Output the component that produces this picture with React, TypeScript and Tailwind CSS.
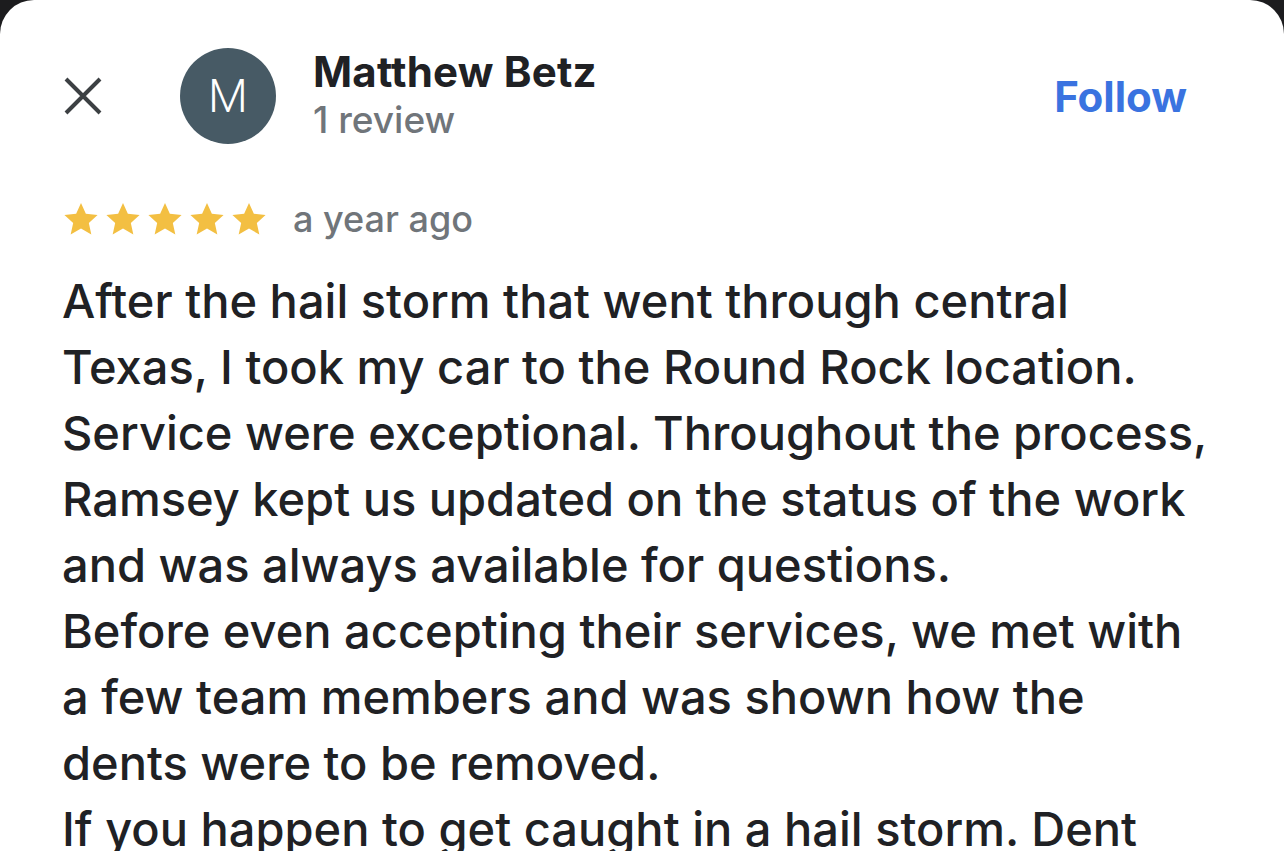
import React from "react";

function Star() {
  return (
    <svg width="38" height="36" viewBox="0 0 24 23" className="shrink-0">
      <path
        d="M12 1.2l3.1 6.9 7.5.8-5.6 5.1 1.6 7.4L12 17.6l-6.6 3.8L7 14l-5.6-5.1 7.5-.8L12 1.2z"
        fill="#f3bf42"
      />
    </svg>
  );
}

export default function App() {
  const font = { fontFamily: "Inter, 'Noto Sans', sans-serif" };
  return (
    <div className="w-[1284px] h-[851px] bg-[#1c1c1e] overflow-hidden" style={font}>
      <div className="w-full h-full bg-white rounded-t-[34px] pl-[62px] pr-[97px]">
        <div className="flex items-center pt-[48px] h-[144px]">
          <svg width="42" height="42" viewBox="0 0 42 42" className="shrink-0">
            <path d="M4 4L38 38M38 4L4 38" stroke="#3c4043" strokeWidth="4" strokeLinecap="butt" />
          </svg>
          <div className="ml-[76px] w-[96px] h-[96px] rounded-full bg-[#475a65] flex items-center justify-center text-white text-[46px] font-light shrink-0 leading-none" style={{ fontFamily: "Roboto, sans-serif" }}>
            M
          </div>
          <div className="ml-[37px] flex flex-col">
            <div className="text-[#202124] text-[42px] font-bold leading-[48px] tracking-[0.2px]">Matthew Betz</div>
            <div className="text-[#70757a] text-[37px] font-medium leading-[48px]">1 review</div>
          </div>
          <div className="ml-auto text-[#3a73e0] text-[42px] font-bold">Follow</div>
        </div>
        <div className="flex items-center mt-[55px] h-[40px]">
          <div className="flex gap-[4px]">
            <Star />
            <Star />
            <Star />
            <Star />
            <Star />
          </div>
          <div className="ml-[25px] text-[#70757a] text-[36px] font-medium">a year ago</div>
        </div>
        <div className="mt-[29px] w-[1155px] text-[#202124] text-[47px] font-medium leading-[66px]">
          <p>After the hail storm that went through central Texas, I took my car to the Round Rock location. Service were exceptional. Throughout the process, Ramsey kept us updated on the status of the work and was always available for questions.</p>
          <p>Before even accepting their services, we met with a few team members and was shown how the dents were to be removed.</p>
          <p>If you happen to get caught in a hail storm. Dent</p>
        </div>
      </div>
    </div>
  );
}
